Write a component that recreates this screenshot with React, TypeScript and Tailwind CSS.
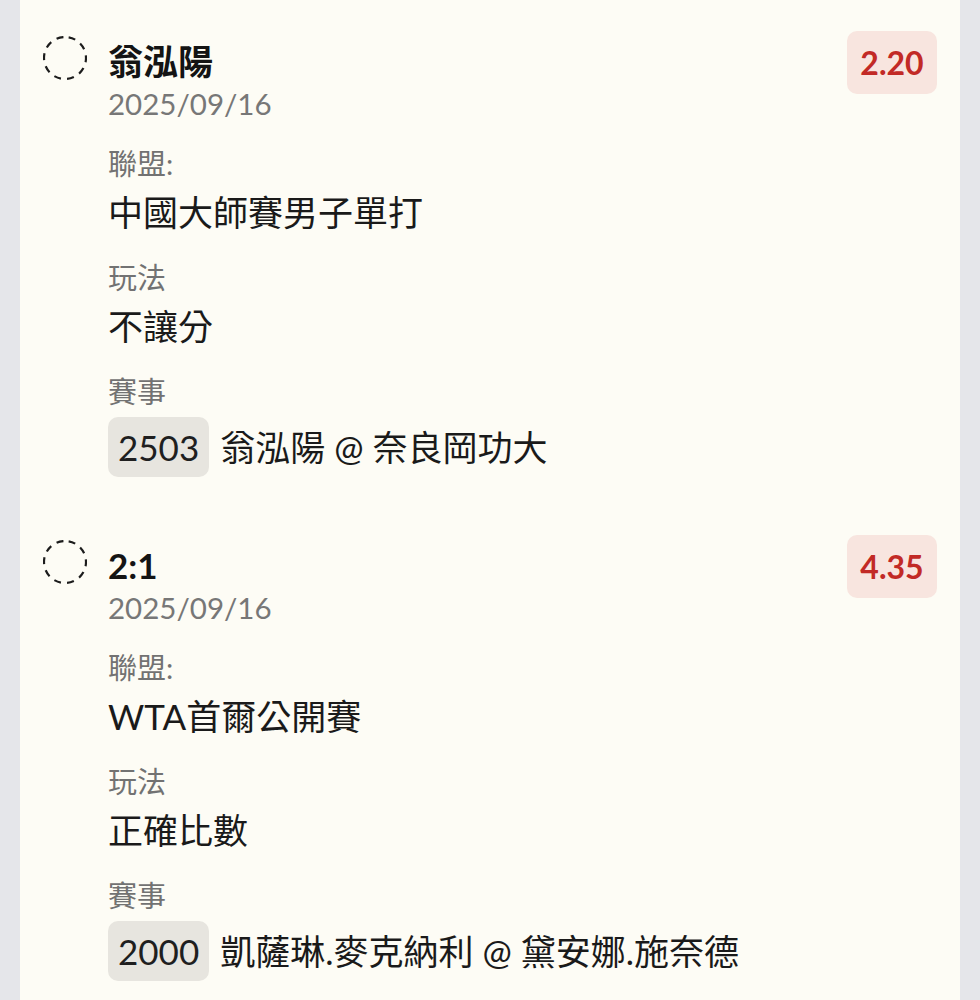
import React from 'react';

interface Pick {
  id: string;
  title: string;
  date: string;
  league: string;
  market: string;
  code: string;
  match: string;
  odds: string;
}

const picks: Pick[] = [
  {
    id: 'a',
    title: '翁泓陽',
    date: '2025/09/16',
    league: '中國大師賽男子單打',
    market: '不讓分',
    code: '2503',
    match: '翁泓陽 @ 奈良岡功大',
    odds: '2.20',
  },
  {
    id: 'b',
    title: '2:1',
    date: '2025/09/16',
    league: 'WTA首爾公開賽',
    market: '正確比數',
    code: '2000',
    match: '凱薩琳.麥克納利 @ 黛安娜.施奈德',
    odds: '4.35',
  },
];

const DashedCircle = () => (
  <svg width="44" height="44" viewBox="0 0 44 44" className="shrink-0 mt-[5px]">
    <circle
      cx="22"
      cy="22"
      r="21"
      fill="none"
      stroke="#1c1c1c"
      strokeWidth="2.2"
      strokeDasharray="7 6.2"
      transform="rotate(-80 22 22)"
    />
  </svg>
);

const PickRow: React.FC<{ pick: Pick }> = ({ pick }) => (
  <div className="flex items-start">
    <DashedCircle />

    <div className="flex-1 min-w-0 ml-[21px] mt-[8px]">
      <div className="text-[35px] font-bold text-[#141414] leading-[45px]">{pick.title}</div>
      <div className="text-[29.5px] leading-[40px] text-[#777777]">{pick.date}</div>

      <div className="mt-[20px] text-[29px] leading-[40px] text-[#727272]">聯盟:</div>
      <div className="mt-[6px] text-[35px] leading-[44px] text-[#1a1a1a]">{pick.league}</div>

      <div className="mt-[24px] text-[29px] leading-[40px] text-[#727272]">玩法</div>
      <div className="mt-[6px] text-[35px] leading-[44px] text-[#1a1a1a]">{pick.market}</div>

      <div className="mt-[24px] text-[29px] leading-[40px] text-[#727272]">賽事</div>
      <div className="mt-[5px] flex items-center">
        <span className="h-[60px] px-[10px] flex items-center rounded-[10px] bg-[#e7e5df] text-[35px] text-[#1f1f1f]">
          {pick.code}
        </span>
        <span className="ml-[11px] text-[35px] leading-[44px] text-[#1a1a1a] whitespace-nowrap">{pick.match}</span>
      </div>
    </div>

    {/* odds badge */}
    <div className="shrink-0 w-[90px] h-[63px] flex items-center justify-center rounded-[10px] bg-[#f8e5df] text-[32px] font-bold text-[#c22a26]">
      {pick.odds}
    </div>
  </div>
);

export default function App() {
  return (
    <div className="min-h-screen bg-[#e5e6ea] px-[20px] font-['Lato','Noto_Sans_CJK_TC',sans-serif]">
      <div className="min-h-screen bg-[#fdfcf5] pl-[23px] pr-[23px] pt-[31px] flex flex-col gap-[58px]">
        {picks.map(p => (
          <PickRow key={p.id} pick={p} />
        ))}
      </div>
    </div>
  );
}
